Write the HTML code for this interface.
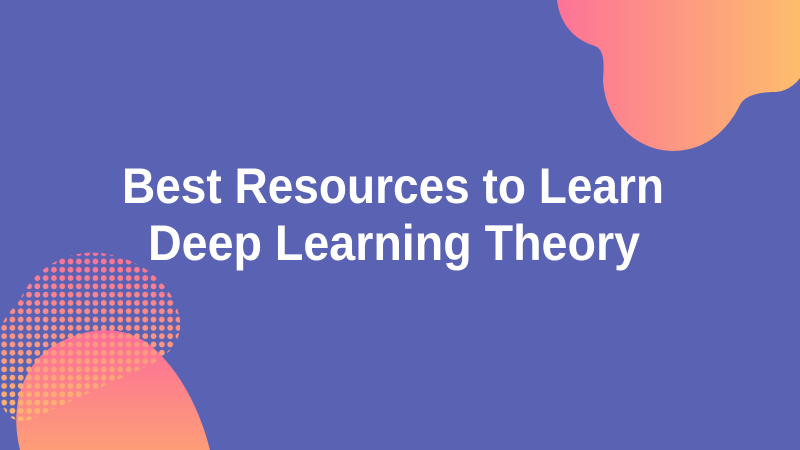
<!DOCTYPE html>
<html><head><style>
html,body{margin:0;padding:0;background:#5a62b3;}
svg{display:block}
</style></head><body>
<svg width="800" height="450" viewBox="0 0 800 450" xmlns="http://www.w3.org/2000/svg">
<defs>
<linearGradient id="g1" x1="0" y1="0" x2="1" y2="0">
<stop offset="0" stop-color="#fd7397"/><stop offset="1" stop-color="#fdbd6c"/>
</linearGradient>
<linearGradient id="g2" x1="0" y1="0" x2="0" y2="1">
<stop offset="0" stop-color="#fd6c9a"/><stop offset="1" stop-color="#fd9d78"/>
</linearGradient>
<linearGradient id="g3" x1="0" y1="0" x2="0" y2="1">
<stop offset="0" stop-color="#fb6f9a"/><stop offset="1" stop-color="#fdbb6c"/>
</linearGradient>
<pattern id="dots" x="0" y="0" width="8.3" height="8.3" patternUnits="userSpaceOnUse">
<circle cx="4.15" cy="4.15" r="2.9" fill="#fff"/>
</pattern>
<mask id="dm"><rect width="800" height="450" fill="url(#dots)"/></mask>
<clipPath id="dc"><path d="M20,300 C35,265 70,250 100,253 C140,257 175,285 180,320 C182,340 170,355 150,365 L30,420 C10,425 0,410 0,390 L0,330 C5,315 12,310 20,300 Z"/></clipPath>
</defs>
<rect width="800" height="450" fill="#5a62b3"/>
<path d="M557,0 C560,25 575,40 595,46 C605,50 604,65 603,80 C605,120 635,150 672,151 C710,151 730,125 740,105 C745,95 760,92 775,92 C785,92 795,85 800,78 L800,0 Z" fill="url(#g1)"/>
<path d="M20,450 C10,410 20,370 50,348 C80,328 120,322 150,345 C180,370 200,410 210,450 Z" fill="url(#g2)"/>
<g clip-path="url(#dc)" mask="url(#dm)"><rect x="0" y="245" width="190" height="185" fill="url(#g3)"/></g>
<g font-family="Liberation Sans, sans-serif" font-weight="bold" font-size="50" fill="#fff">
<text x="122" y="203" textLength="542" lengthAdjust="spacingAndGlyphs">Best Resources to Learn</text>
<text x="148" y="260" textLength="492" lengthAdjust="spacingAndGlyphs">Deep Learning Theory</text>
</g>
</svg>
</body></html>
